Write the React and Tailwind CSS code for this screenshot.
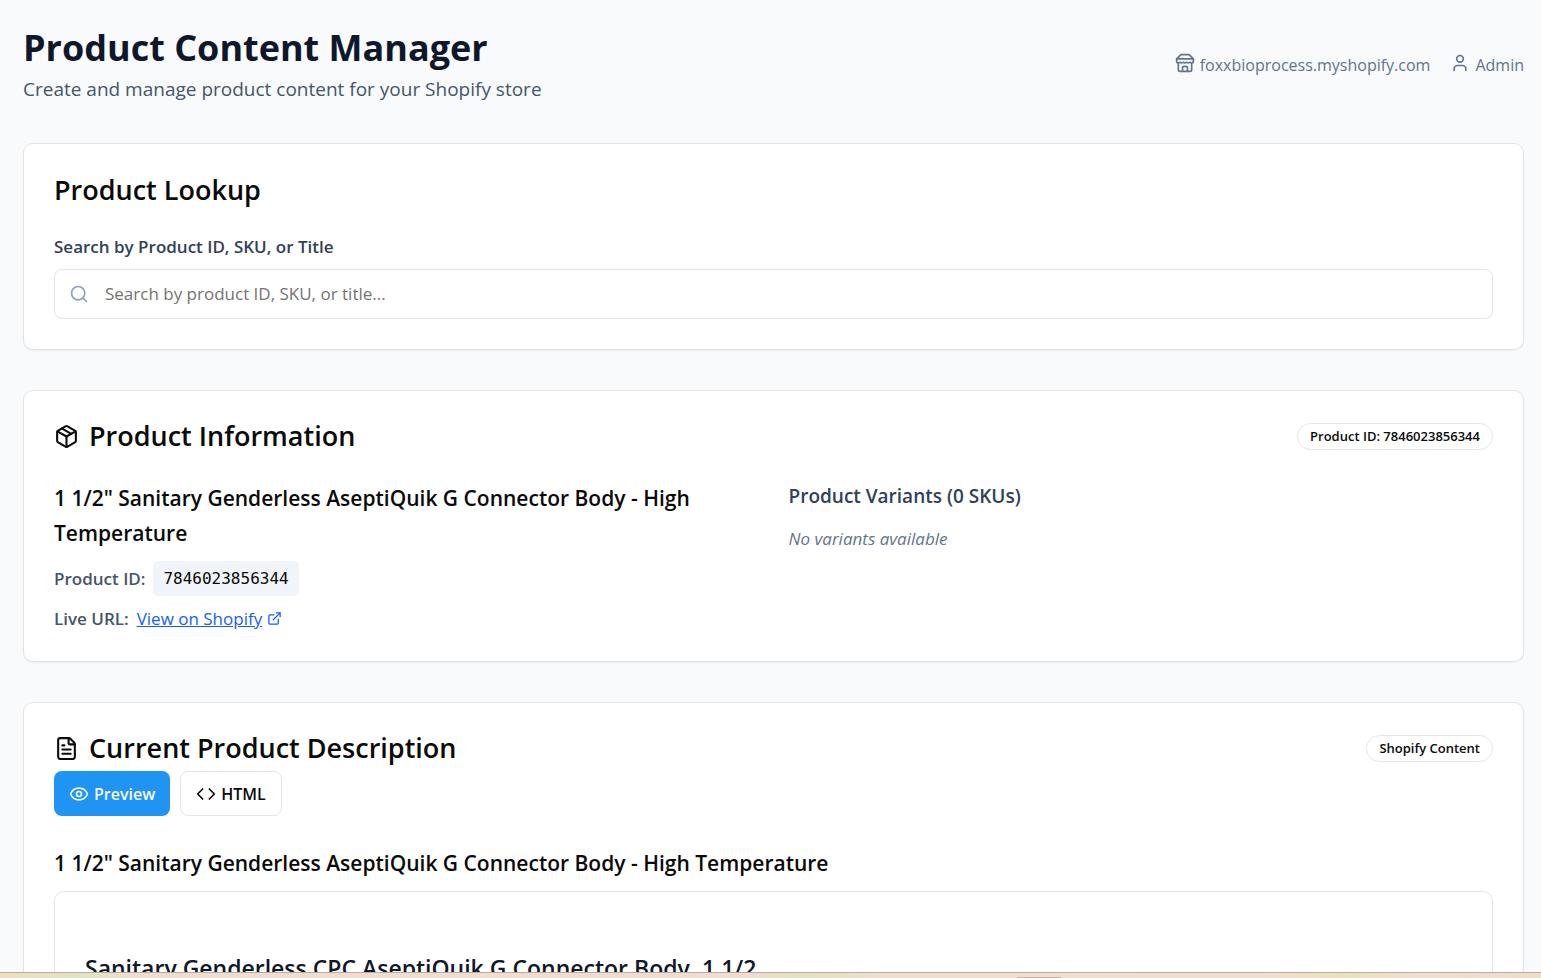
import { Code, ExternalLink, Eye, FileText, Package, Search, User } from "lucide-react";

function StoreIcon({ className }) {
  return (
    <svg
      className={className}
      viewBox="0 0 24 24"
      fill="none"
      stroke="currentColor"
      strokeWidth="2"
      strokeLinecap="round"
      strokeLinejoin="round"
      aria-hidden="true"
    >
      <path d="m2 7 4.41-4.41A2 2 0 0 1 7.83 2h8.34a2 2 0 0 1 1.42.59L22 7" />
      <path d="M4 12v8a2 2 0 0 0 2 2h12a2 2 0 0 0 2-2v-8" />
      <path d="M15 22v-4a2 2 0 0 0-2-2h-2a2 2 0 0 0-2 2v4" />
      <path d="M2 7h20" />
      <path d="M22 7v3a2 2 0 0 1-2 2a2.7 2.7 0 0 1-1.59-.63.7.7 0 0 0-.82 0A2.7 2.7 0 0 1 16 12a2.7 2.7 0 0 1-1.59-.63.7.7 0 0 0-.82 0A2.7 2.7 0 0 1 12 12a2.7 2.7 0 0 1-1.59-.63.7.7 0 0 0-.82 0A2.7 2.7 0 0 1 8 12a2.7 2.7 0 0 1-1.59-.63.7.7 0 0 0-.82 0A2.7 2.7 0 0 1 4 12a2 2 0 0 1-2-2V7" />
    </svg>
  );
}

function Card({ children }) {
  return (
    <section className="rounded-[10px] border border-[#e5e5e5] bg-white p-[30px] shadow-xs">
      {children}
    </section>
  );
}

function CardTitle({ icon: Icon, children }) {
  return (
    <h2 className="flex items-center gap-2.5 text-[27px] leading-8 font-semibold text-[#0a0a0a]">
      {Icon && <Icon className="size-[25px]" aria-hidden="true" />}
      {children}
    </h2>
  );
}

function Badge({ children }) {
  return (
    <span className="rounded-full border border-slate-200 px-3 text-[13px] leading-[25px] font-semibold text-[#0a0a0a]">
      {children}
    </span>
  );
}

export default function App() {
  return (
    <div className="flex h-screen flex-col bg-[#f8fafc] font-['Open_Sans',sans-serif] text-[17px] text-[#0a0a0a]">
      <main className="min-h-0 flex-1 overflow-hidden pt-[25px] pr-[17px] pl-[23px]">
        <header className="mb-[39px] flex items-center justify-between">
          <div>
            <h1 className="text-[36px] leading-[45px] font-bold text-slate-900">Product Content Manager</h1>
            <p className="mt-1 text-[19px] leading-[30px] text-slate-600">
              Create and manage product content for your Shopify store
            </p>
          </div>
          <div className="flex items-center gap-5 text-base leading-6 text-slate-500">
            <span className="flex items-start gap-[5px]">
              <StoreIcon className="size-5" />
              foxxbioprocess.myshopify.com
            </span>
            <span className="flex items-start gap-[5px]">
              <User className="size-5" aria-hidden="true" />
              Admin
            </span>
          </div>
        </header>

        <div className="flex flex-col gap-10">
          <Card>
            <CardTitle>Product Lookup</CardTitle>
            <label htmlFor="lookup" className="mt-[28px] block leading-[25px] font-semibold text-slate-700">
              Search by Product ID, SKU, or Title
            </label>
            <div className="mt-2.5 flex h-[50px] items-center gap-4 rounded-lg border border-[#e5e5e5] px-3.5">
              <Search className="size-5 text-slate-400" aria-hidden="true" />
              <input
                id="lookup"
                type="text"
                placeholder="Search by product ID, SKU, or title..."
                className="min-w-0 flex-1 bg-transparent outline-none placeholder:text-[#737373]"
              />
            </div>
          </Card>

          <Card>
            <div className="flex h-[30px] items-center justify-between">
              <CardTitle icon={Package}>Product Information</CardTitle>
              <Badge>Product ID: 7846023856344</Badge>
            </div>
            <div className="mt-[30px] grid grid-cols-2 gap-[30px]">
              <div className="flex flex-col gap-2.5">
                <h3 className="text-[21px] leading-[35px] font-semibold">
                  1 1/2" Sanitary Genderless AseptiQuik G Connector Body - High Temperature
                </h3>
                <div className="flex items-center gap-2">
                  <span className="font-semibold text-slate-600">Product ID:</span>
                  <code className="rounded-[5px] bg-slate-100 px-2.5 font-['DejaVu_Sans_Mono',monospace] text-base leading-[35px]">
                    7846023856344
                  </code>
                </div>
                <div className="flex items-center gap-2 leading-[25px]">
                  <span className="font-semibold text-slate-600">Live URL:</span>
                  <a href="#shopify" className="flex items-center gap-[5px] text-blue-600 underline">
                    View on Shopify
                    <ExternalLink className="size-[15px]" aria-hidden="true" />
                  </a>
                </div>
              </div>
              <div>
                <h4 className="text-[19px] leading-[30px] font-semibold text-slate-700">Product Variants (0 SKUs)</h4>
                <p className="mt-[15px] leading-[25px] text-slate-500 italic">No variants available</p>
              </div>
            </div>
          </Card>

          <Card>
            <div className="flex h-[30px] items-center justify-between">
              <CardTitle icon={FileText}>Current Product Description</CardTitle>
              <Badge>Shopify Content</Badge>
            </div>
            <div className="mt-2 flex gap-2.5">
              <button
                type="button"
                className="flex h-[45px] items-center gap-[5px] rounded-lg bg-[#2094f3] px-[15px] text-base font-semibold text-slate-50"
              >
                <Eye className="size-5" aria-hidden="true" />
                Preview
              </button>
              <button
                type="button"
                className="flex h-[45px] items-center gap-[5px] rounded-lg border border-[#e5e5e5] bg-white px-[15px] text-base font-semibold"
              >
                <Code className="size-5" aria-hidden="true" />
                HTML
              </button>
            </div>
            <h3 className="mt-[30px] text-[21px] leading-[35px] font-semibold">
              1 1/2" Sanitary Genderless AseptiQuik G Connector Body - High Temperature
            </h3>
            <article className="mt-2.5 rounded-[10px] border border-[#e5e5e5] px-[30px] py-[59px]">
              <h2 className="text-[23px] leading-[35px] font-semibold text-slate-900">
                Sanitary Genderless CPC AseptiQuik G Connector Body, 1 1/2
              </h2>
            </article>
          </Card>
        </div>
      </main>
      <footer className="flex h-[6px] shrink-0 items-end border-t border-[#b8ada0] bg-[linear-gradient(90deg,#eedfc0_0%,#e0e4c0_5%,#f0ddcf_9%,#f1ddd0_48%,#e2e3bf_52%,#efdecd_57%,#f1ddd0_82%,#ece2b8_87%,#f0ddcf_92%,#eddec8_100%)] pl-[66%]">
        <div className="h-px w-11 bg-[#e2a9a2]" />
      </footer>
    </div>
  );
}
